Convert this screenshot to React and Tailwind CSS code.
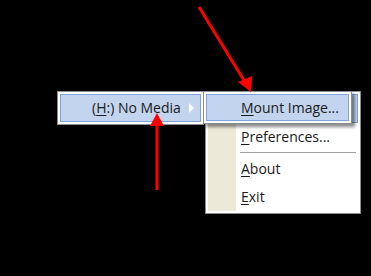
import React from "react";

const font = { fontFamily: '"Open Sans", "Noto Sans", Tahoma, sans-serif' };

function U({ children }) {
  return <span className="underline underline-offset-2 decoration-1">{children}</span>;
}

export default function App() {
  return (
    <div className="relative w-[371px] h-[276px] bg-black overflow-hidden text-[14px] text-[#1a1a1a]" style={font}>
      {/* First menu */}
      <div className="absolute left-[57px] top-[91px] w-[147px] h-[34px] bg-white border border-[#8c8c8c] p-[2px]">
        <div className="h-full bg-[#c3d4ef] border border-[#7fa2da] flex items-center pl-[31px] pb-[1px] relative">
          <span>(<U>H</U>:) No Media</span>
          <span className="absolute right-[6px] top-[8px] w-0 h-0 border-y-[5px] border-y-transparent border-l-[5px] border-l-white" />
        </div>
      </div>

      {/* Submenu */}
      <div className="absolute left-[205px] top-[91px] w-[156px] h-[123px] bg-white border border-[#8c8c8c] p-[2px] flex">
        <div className="absolute left-[2px] top-[2px] bottom-[2px] w-[28px] bg-[#ece9d8]" />
        <div className="relative flex flex-col w-full">
          <div className="h-[29px] bg-[#c3d4ef] border border-[#7fa2da]" />
          <div className="h-[28px] flex items-center pl-[33px] pb-[1px]"><span><U>P</U>references...</span></div>
          <div className="ml-[32px] mr-[2px] my-[1px] h-[2px] border-t border-[#a0a0a0] border-b border-b-white" />
          <div className="h-[28px] flex items-center pl-[33px] pb-[1px]"><span><U>A</U>bout</span></div>
          <div className="h-[28px] flex items-center pl-[33px] pb-[1px]"><span><U>E</U>xit</span></div>
        </div>
      </div>

      {/* Popped Mount Image box */}
      <div className="absolute left-[203px] top-[91px] w-[149px] h-[33px] bg-white border border-[#8c8c8c] p-[2px] shadow-[3px_3px_3px_rgba(0,0,0,0.45)]">
        <div className="h-full bg-[#c3d4ef] border border-[#7fa2da] flex items-center pl-[34px] pb-[1px]">
          <span><U>M</U>ount Image...</span>
        </div>
      </div>

      {/* Arrows */}
      <svg className="absolute left-0 top-0" width="371" height="276">
        <line x1="199" y1="7" x2="245" y2="82" stroke="#ff0000" strokeWidth="3" />
        <polygon points="238,82 251,92 252,76" fill="#ff0000" />
        <line x1="157" y1="190" x2="157" y2="124" stroke="#ff0000" strokeWidth="3" />
        <polygon points="150,126 164,126 157,113" fill="#ff0000" />
      </svg>
    </div>
  );
}
